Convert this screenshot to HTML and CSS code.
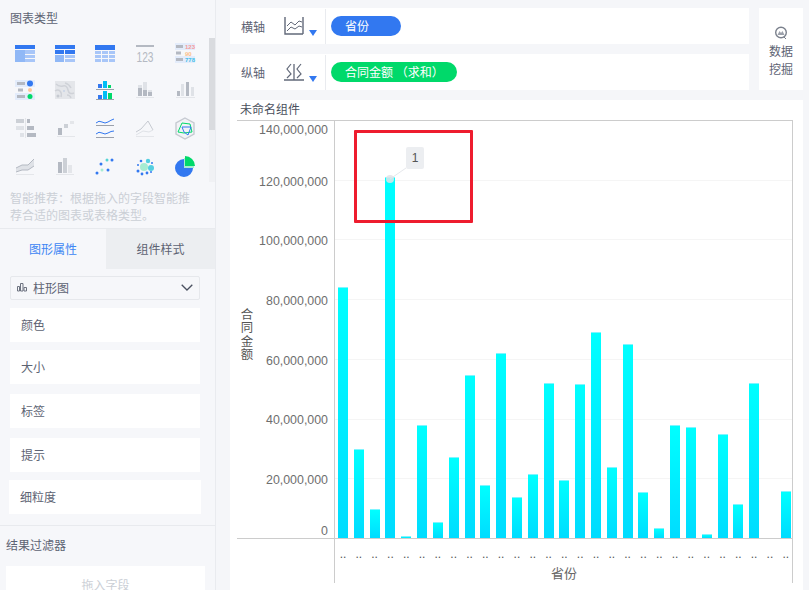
FILE: index.html
```html
<!DOCTYPE html>
<html lang="zh">
<head>
<meta charset="utf-8">
<title>未命名组件</title>
<link rel="stylesheet" href="styles.css">
</head>
<body>
<aside class="sidebar">
  <h2 class="side-title">图表类型</h2>
  <div class="types">
    <div class="type-grid">
      <svg class="ti" viewBox="0 0 24 24"><rect x="2" y="4" width="20" height="4" fill="#3278f0"/><rect x="2" y="9" width="10" height="12" fill="#90b8f6"/><rect x="12" y="9" width="10" height="4" fill="#a8c6f8"/><rect x="12" y="14" width="10" height="3" fill="#a8c6f8"/><rect x="12" y="18" width="10" height="3" fill="#a8c6f8"/></svg>
      <svg class="ti" viewBox="0 0 24 24"><rect x="2" y="4" width="20" height="4" fill="#3278f0"/><rect x="2" y="9" width="9" height="4" fill="#3278f0"/><rect x="12" y="9" width="10" height="4" fill="#3278f0"/><rect x="2" y="14" width="9" height="7" fill="#90b8f6"/><rect x="12" y="14" width="10" height="3" fill="#a8c6f8"/><rect x="12" y="18" width="10" height="3" fill="#a8c6f8"/></svg>
      <svg class="ti" viewBox="0 0 24 24"><rect x="2" y="4" width="20" height="5" fill="#3278f0"/><g fill="#a8c6f8"><rect x="2" y="10" width="6" height="3"/><rect x="9" y="10" width="6" height="3"/><rect x="16" y="10" width="6" height="3"/><rect x="2" y="14" width="6" height="3"/><rect x="9" y="14" width="6" height="3"/><rect x="16" y="14" width="6" height="3"/><rect x="2" y="18" width="6" height="3"/><rect x="9" y="18" width="6" height="3"/><rect x="16" y="18" width="6" height="3"/></g></svg>
      <svg class="ti" viewBox="0 0 24 24"><rect x="3" y="4" width="18" height="2" fill="#b4b9c2"/><text class="ti-num" x="12" y="21" text-anchor="middle" textLength="17" lengthAdjust="spacingAndGlyphs">123</text></svg>
      <svg class="ti" viewBox="0 0 24 24"><rect x="2" y="2" width="20" height="7" fill="#e3ecfb"/><rect x="2" y="15" width="20" height="7" fill="#e3ecfb"/><g fill="#b4b9c2"><rect x="3" y="4" width="7" height="3"/><rect x="3" y="10.500" width="5" height="3"/><rect x="3" y="17" width="7" height="3"/></g><text class="ti-mini red" x="12" y="8">123</text><text class="ti-mini orange" x="12" y="14.500">90</text><text class="ti-mini sky" x="12" y="21">778</text></svg>
      <svg class="ti" viewBox="0 0 24 24"><rect x="2" y="2" width="20" height="7" fill="#e3ecfb"/><rect x="2" y="15" width="20" height="7" fill="#e3ecfb"/><g fill="#b4b9c2"><rect x="4" y="4" width="8" height="3"/><rect x="5" y="10.500" width="5" height="3"/><rect x="4" y="17" width="8" height="3"/></g><circle cx="17" cy="5.500" r="3" fill="#3278f0"/><circle cx="17" cy="12" r="2" fill="#fdc79b"/><circle cx="17" cy="18.500" r="2.500" fill="#00d96a"/></svg>
      <svg class="ti" viewBox="0 0 24 24"><rect x="2" y="3" width="20" height="18" fill="#e4e6ea"/><path d="M3 6q3 3 7 2t5 4 6 3M2 13q3-2 5 0t1 6M12 5q4 1 6 5M14 17q3 0 4 3" stroke="#cfd2d8" stroke-width="1.500" fill="none"/><circle cx="5" cy="18" r="1.500" fill="#c6cad1"/><circle cx="11" cy="13" r="1" fill="#c9d3e6"/></svg>
      <svg class="ti" viewBox="0 0 24 24"><rect x="5" y="6" width="4" height="4" fill="#3278f0"/><rect x="10" y="3" width="4" height="7" fill="#00bdf5"/><rect x="15" y="7" width="3" height="3" fill="#00d96a"/><rect x="3" y="11" width="18" height="1" fill="#9aa0ab"/><rect x="5" y="17" width="4" height="4" fill="#3278f0"/><rect x="10" y="13" width="4" height="8" fill="#00bdf5"/><rect x="15" y="15" width="4" height="6" fill="#00d96a"/><rect x="3" y="21" width="18" height="1" fill="#9aa0ab"/></svg>
      <svg class="ti" viewBox="0 0 24 24"><rect x="5" y="7" width="4" height="3" fill="#dfe2e7"/><rect x="5" y="10" width="4" height="8" fill="#b4b9c2"/><rect x="10" y="4" width="4" height="8" fill="#dfe2e7"/><rect x="10" y="12" width="4" height="6" fill="#b4b9c2"/><rect x="15" y="12" width="4" height="2" fill="#dfe2e7"/><rect x="15" y="14" width="4" height="4" fill="#b4b9c2"/><rect x="3" y="19" width="18" height="1" fill="#e4e6ea"/></svg>
      <svg class="ti" viewBox="0 0 24 24"><rect x="4" y="13" width="3" height="5" fill="#b4b9c2"/><rect x="8" y="6" width="3" height="12" fill="#dfe2e7"/><rect x="13" y="4" width="3" height="14" fill="#b4b9c2"/><rect x="18" y="9" width="3" height="9" fill="#dfe2e7"/><rect x="3" y="19" width="19" height="1" fill="#e4e6ea"/></svg>
      <svg class="ti" viewBox="0 0 24 24"><rect x="12" y="2" width="1" height="20" fill="#e4e6ea"/><rect x="3" y="3" width="8" height="4" fill="#ccd0d6"/><rect x="14" y="3" width="3" height="4" fill="#b4b9c2"/><rect x="3" y="10" width="8" height="4" fill="#dfe2e7"/><rect x="14" y="10" width="7" height="4" fill="#b4b9c2"/><rect x="7" y="17" width="4" height="4" fill="#dfe2e7"/><rect x="14" y="17" width="9" height="4" fill="#b4b9c2"/></svg>
      <svg class="ti" viewBox="0 0 24 24"><rect x="5" y="12" width="4" height="7" fill="#b4b9c2"/><rect x="11" y="8" width="4" height="4" fill="#ccd0d6"/><rect x="17" y="5" width="4" height="3" fill="#e4e6ea"/><rect x="4" y="20" width="18" height="1" fill="#e4e6ea"/></svg>
      <svg class="ti" viewBox="0 0 24 24"><path d="M3 7q3-3 6-1t6 0 6-3" stroke="#3278f0" fill="none"/><rect x="3" y="9" width="18" height="1" fill="#9aa0ab"/><path d="M3 18q3-3 6-1t6 0 6-2" stroke="#3278f0" fill="none"/><rect x="3" y="21" width="18" height="1" fill="#9aa0ab"/></svg>
      <svg class="ti" viewBox="0 0 24 24"><path d="M3 16l5-3 7-8 5 9" stroke="#c6cad1" fill="none"/><path d="M3 19l7-4 6 1 4-2" stroke="#dfe2e7" fill="none"/><rect x="3" y="20" width="18" height="1" fill="#e4e6ea"/></svg>
      <svg class="ti" viewBox="0 0 24 24"><path d="M12 2l9 5v11l-9 5-9-5V7z" stroke="#c6cad1" stroke-width="1.400" fill="#f2f3f6"/><path d="M5 16l4-9 8 1 2 8-8 1z" stroke="#00d96a" fill="none"/><path d="M9 11h9l-3 8-4-3z" stroke="#3278f0" fill="none"/></svg>
      <svg class="ti" viewBox="0 0 24 24"><path d="M3 14l6-3 6 0 6-6v7l-6 4-6 0-6 2z" fill="#dfe2e7"/><path d="M3 14l6-3 6 0 6-6M3 18l6-2 6 0 6-4" stroke="#b4b9c2" fill="none"/><rect x="3" y="20" width="18" height="1" fill="#e4e6ea"/></svg>
      <svg class="ti" viewBox="0 0 24 24"><rect x="5" y="8" width="4" height="11" fill="#b4b9c2"/><rect x="10" y="4" width="4" height="15" fill="#ccd0d6"/><rect x="15" y="11" width="4" height="8" fill="#e4e6ea"/><rect x="3" y="20" width="18" height="1" fill="#e4e6ea"/></svg>
      <svg class="ti" viewBox="0 0 24 24"><g fill="#3278f0"><circle cx="4" cy="19" r="1.500"/><circle cx="8" cy="10" r="1.500"/><circle cx="15" cy="16" r="1.500"/><circle cx="19" cy="6" r="1.500"/></g><circle cx="9" cy="16" r="1.500" fill="#a6ecd2"/><circle cx="14" cy="6" r="1.500" fill="#54d4d4"/></svg>
      <svg class="ti" viewBox="0 0 24 24"><circle cx="11" cy="13" r="4" fill="#a6ecd2"/><circle cx="18" cy="14" r="3" fill="#54cfe0"/><circle cx="15" cy="7" r="2.200" fill="#54cfe0"/><g fill="#3278f0"><circle cx="8" cy="7" r="1.300"/><circle cx="19" cy="9" r="1"/><circle cx="5" cy="11" r="1"/><circle cx="5" cy="17" r="1.500"/><circle cx="9" cy="20" r="1.400"/><circle cx="14" cy="19" r="1.400"/><circle cx="18" cy="18" r="1"/></g></svg>
      <svg class="ti" viewBox="0 0 24 24"><path d="M11 5a9 9 0 1 0 9 9h-9z" fill="#3278f0"/><path d="M12 2a10 10 0 0 1 10 10H12z" fill="#00d96a"/><path d="M12 12h9v2h-10V4h1z" fill="#a6ecd2"/></svg>
    </div>
    <div class="scrollbar"><div class="scroll-thumb"></div></div>
  </div>
  <p class="hint">智能推荐：根据拖入的字段智能推荐合适的图表或表格类型。</p>
  <div class="tabs">
    <div class="tab tab-active">图形属性</div>
    <div class="tab tab-idle">组件样式</div>
  </div>
  <div class="select">
    <svg class="select-ic" viewBox="0 0 10 10"><path d="M.5 9V4.500h2V9zM3.500 9V1.500h2.500V9zM7 9V5.500h2.500V9z" fill="none" stroke="#6d7380"/></svg>
    <span class="select-text">柱形图</span>
    <svg class="chev" viewBox="0 0 12 7"><path d="M.7.7L6 6l5.300-5.300" fill="none" stroke="#4a5160" stroke-width="1.300"/></svg>
  </div>
  <div class="prop prop-a">颜色</div>
  <div class="prop prop-a">大小</div>
  <div class="prop prop-b">标签</div>
  <div class="prop prop-b">提示</div>
  <div class="prop prop-wide">细粒度</div>
  <div class="filter">
    <h3 class="filter-title">结果过滤器</h3>
    <div class="drop">拖入字段</div>
  </div>
</aside>

<main class="main">
  <div class="top">
    <div class="shelves">
      <div class="shelf">
        <span class="shelf-label">横轴</span>
        <svg class="shelf-ic" viewBox="0 0 20 18"><path d="M1 0v17h18M19 0v17" fill="none" stroke="#626979" stroke-width="1.400"/><path d="M3 9l4-4 4 3 4-4 3 1M3 14l4-4 4 2 4-3 3 1" fill="none" stroke="#626979"/></svg>
        <span class="arrow"></span>
        <span class="sep"></span>
        <span class="pill pill-blue">省份</span>
      </div>
      <div class="shelf">
        <span class="shelf-label">纵轴</span>
        <svg class="shelf-ic" viewBox="0 0 20 18"><path d="M0 17h20M10 1v16" fill="none" stroke="#626979" stroke-width="1.300"/><path d="M7 1L3 6l4 5-4 4M17 1l-4 5 4 5-4 4" fill="none" stroke="#626979" stroke-width="1.200"/></svg>
        <span class="arrow"></span>
        <span class="sep"></span>
        <span class="pill pill-green">合同金额 （求和）</span>
      </div>
    </div>
    <div class="mining">
      <svg class="mining-ic" viewBox="0 0 14 14"><circle cx="7" cy="6.500" r="5.300" fill="none" stroke="#7a808c" stroke-width="1.400"/><path d="M3.500 9l2-4 1.500 2 1.500-2 2 4z" fill="#9ca1ab"/><path d="M10 11l2 2" stroke="#7a808c"/></svg>
      <div class="mining-text">数据<br>挖掘</div>
    </div>
  </div>
  <section class="card">
    <h1 class="card-title">未命名组件</h1>
    <div class="chart">
      <div class="yaxis">
        <div class="ytick ytick-top">140,000,000</div>
        <div class="ytick">120,000,000</div>
        <div class="ytick">100,000,000</div>
        <div class="ytick">80,000,000</div>
        <div class="ytick">60,000,000</div>
        <div class="ytick">40,000,000</div>
        <div class="ytick">20,000,000</div>
        <div class="ytick ytick-zero">0</div>
        <div class="ytitle">合同金额</div>
      </div>
      <div class="plot">
        <div class="bar" style="height:251px"></div>
        <div class="bar" style="height:89px"></div>
        <div class="bar" style="height:29px"></div>
        <div class="bar" style="height:361px"></div>
        <div class="bar" style="height:2px"></div>
        <div class="bar" style="height:113px"></div>
        <div class="bar" style="height:16px"></div>
        <div class="bar" style="height:81px"></div>
        <div class="bar" style="height:163px"></div>
        <div class="bar" style="height:53px"></div>
        <div class="bar" style="height:185px"></div>
        <div class="bar" style="height:41px"></div>
        <div class="bar" style="height:64px"></div>
        <div class="bar" style="height:155px"></div>
        <div class="bar" style="height:58px"></div>
        <div class="bar" style="height:154px"></div>
        <div class="bar" style="height:206px"></div>
        <div class="bar" style="height:71px"></div>
        <div class="bar" style="height:194px"></div>
        <div class="bar" style="height:46px"></div>
        <div class="bar" style="height:10px"></div>
        <div class="bar" style="height:113px"></div>
        <div class="bar" style="height:111px"></div>
        <div class="bar" style="height:4px"></div>
        <div class="bar" style="height:104px"></div>
        <div class="bar" style="height:34px"></div>
        <div class="bar" style="height:155px"></div>
        <div class="bar bar-empty"></div>
        <div class="bar" style="height:47px"></div>
        <svg class="leader" viewBox="0 0 40 30"><line x1="8" y1="25" x2="24" y2="14" stroke="#e6e8ec"/><circle cx="8" cy="25" r="4" fill="#e0e3e8" fill-opacity=".85"/></svg>
        <div class="tip">1</div>
      </div>
      <div class="corner"></div>
      <div class="xaxis">
        <div class="xticks">
          <span>..</span><span>..</span><span>..</span><span>..</span><span>..</span><span>..</span><span>..</span><span>..</span><span>..</span><span>..</span><span>..</span><span>..</span><span>..</span><span>..</span><span>..</span><span>..</span><span>..</span><span>..</span><span>..</span><span>..</span><span>..</span><span>..</span><span>..</span><span>..</span><span>..</span><span>..</span><span>..</span><span>..</span><span>..</span>
        </div>
        <div class="xtitle">省份</div>
      </div>
      <div class="redbox"></div>
    </div>
  </section>
</main>
</body>
</html>
```
FILE: styles.css
```css
* { box-sizing: border-box; }
html, body { margin: 0; height: 590px; overflow: hidden; }
body {
  display: flex;
  background: #f5f6f9;
  font-family: "Noto Sans CJK SC", "Liberation Sans", sans-serif;
  font-size: 12px;
  color: #5d6373;
}
h1, h2, h3, p { margin: 0; font-weight: 400; font-size: 12px; }

/* sidebar */
.sidebar { width: 216px; flex: none; height: 590px; overflow: hidden; background: #f6f7fa; border-right: 1px solid #e9ebef; }
.side-title { padding: 10px 10px 0; line-height: 16px; height: 34px; color: #5d6373; }
.types { display: flex; height: 148px; }
.type-grid { width: 204px; margin-left: 5px; display: grid; grid-template-columns: repeat(5, 40px); grid-auto-rows: 37.67px; align-items: center; justify-items: center; }
.ti { width: 24px; height: 24px; display: block; overflow: visible; }
.ti-num { font: 15px "Liberation Sans", sans-serif; fill: #b4b9c2; }
.ti-mini { font: 700 6px "Liberation Sans", sans-serif; }
.red { fill: #f59a9a; }
.orange { fill: #fdbd88; }
.sky { fill: #45bfe8; }
.scrollbar { width: 6px; margin-top: 4px; background: #f0f1f4; }
.scroll-thumb { height: 92px; background: #d9dbdf; }
.hint { padding: 7px 20px 0 10px; height: 46px; line-height: 17px; color: #cbcfd6; }
.tabs { display: flex; height: 41px; border-top: 1px solid #e8eaee; }
.tab { line-height: 40px; text-align: center; }
.tab-active { width: 106px; color: #3d86f4; }
.tab-idle { width: 109px; background: #eceef1; }
.select { display: flex; align-items: center; margin: 7px 15px 8px 10px; height: 24px; padding: 0 6px 2px; border: 1px solid #e6e8ec; border-radius: 2px; }
.select-ic { width: 10px; height: 10px; }
.select-text { margin-left: 6px; flex: 1; }
.chev { width: 12px; height: 7px; }
.prop { height: 34px; line-height: 34px; margin-left: 10px; width: 190px; padding-left: 11px; background: #fff; }
.prop-a { margin-bottom: 8px; }
.prop-a + .prop-a { margin-bottom: 10px; }
.prop-b { margin-bottom: 10px; }
.prop-b + .prop-b { margin-bottom: 8px; }
.prop-wide { margin-left: 9px; width: 192px; }
.filter { margin-top: 11px; border-top: 1px solid #e8eaee; padding: 10px 10px 0 6px; }
.filter-title { line-height: 17px; margin-bottom: 13px; }
.drop { height: 40px; background: #fff; text-align: center; line-height: 38px; color: #cbcfd6; }

/* main */
.main { flex: 1; min-width: 0; padding: 8px 6px 0 14px; display: flex; flex-direction: column; gap: 10px; }
.top { display: flex; gap: 10px; height: 82px; }
.shelves { width: 519px; display: flex; flex-direction: column; gap: 10px; }
.shelf { height: 36px; background: #fff; display: flex; align-items: center; }
.sep { width: 1px; height: 35px; background: #e9ebef; margin: 0 5px 0 8px; }
.shelf-label { margin-left: 11px; width: 43px; }
.shelf-ic { width: 20px; height: 18px; }
.arrow { margin: 14px 0 0 5px; width: 0; height: 0; border-left: 4px solid transparent; border-right: 4px solid transparent; border-top: 6px solid #3278f0; }
.pill { height: 20px; line-height: 20px; border-radius: 10px; color: #fff; padding-left: 14px; }
.pill-blue { width: 70px; background: #3278f0; }
.pill-green { width: 126px; background: #00d96a; }
.mining { width: 44px; background: #fff; text-align: center; padding-top: 18px; }
.mining-ic { display: block; width: 14px; height: 14px; margin: 0 auto 2px; }
.mining-text { line-height: 18px; }

/* chart card */
.card { flex: 1; background: #fff; padding: 0 0 0 7px; }
.card-title { height: 20px; line-height: 18px; padding-left: 3px; color: #4a4f5c; }
.chart { position: relative; width: 556px; display: grid; grid-template-columns: 97px 459px; grid-template-rows: 419px 44px; }
.yaxis { border-top: 1px solid #ccc; border-bottom: 1px solid #ccc; padding: 0 6px 0 0; display: flex; flex-direction: column; align-items: flex-end; position: relative; font: 12.400px "Liberation Sans", sans-serif; color: #6e6e6e; }
.ytick { height: 59.7px; line-height: 59.7px; white-space: nowrap; position: relative; top: 1px; }
.ytick-top { height: 18px; line-height: 18px; margin-bottom: 12.500px; top: 0; }
.ytick-zero { height: 28px; line-height: 15px; padding-top: 14px; top: 0; }
.ytitle { position: absolute; left: 3px; top: 187px; writing-mode: vertical-rl; letter-spacing: 1px; line-height: 14px; font-family: "Noto Sans CJK SC", sans-serif; color: #555; }
.plot { position: relative; display: flex; align-items: flex-end; gap: 5.820px; padding-left: 3px; border: 1px solid #ccc; background: repeating-linear-gradient(to top, transparent 0 58.7px, #f5f5f5 58.7px 59.7px); width: 459px; }
.bar { flex: none; width: 10px; background: linear-gradient(#00ffff, #00dcff); border-top: 1px solid #7ff5ff; }
.bar-empty { height: 0; border: 0; }
.leader { position: absolute; left: 47px; top: 33px; width: 40px; height: 30px; }
.tip { position: absolute; left: 71px; top: 26px; width: 18px; height: 22px; line-height: 22px; text-align: center; background: #eceef1; border-radius: 2px; font-family: "Liberation Sans", sans-serif; color: #555; }
.xaxis { border-left: 1px solid #ccc; border-right: 1px solid #ccc; width: 459px; height: 44px; padding-left: 3px; }
.xticks { display: flex; gap: 5.820px; padding-top: 8px; height: 24px; line-height: 14px; font-family: "Liberation Sans", sans-serif; color: #555; }
.xticks span { flex: none; width: 10px; text-align: center; }
.xtitle { text-align: center; line-height: 18px; margin-top: 1px; padding-right: 2px; color: #666; font-size: 13px; }
.redbox { position: absolute; left: 117px; top: 10px; width: 119px; height: 93px; border: 3px solid #ee1c2e; border-radius: 1px; }
```
